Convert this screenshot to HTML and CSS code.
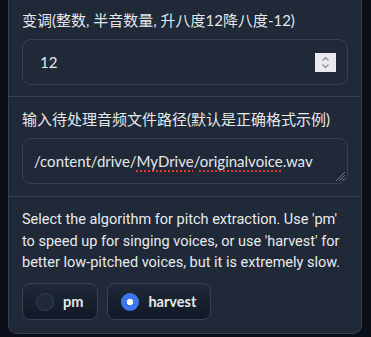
FILE: index.html
```html
<!DOCTYPE html>
<html>
<head>
<meta charset="utf-8">
<link rel="stylesheet" href="styles.css">
</head>
<body>
<div class="panel">
  <div class="block b1">
    <div class="label">变调(整数, 半音数量, 升八度12降八度-12)</div>
    <div class="input number">
      <span class="val">12</span>
      <span class="spin">
        <svg width="21" height="19" viewBox="0 0 21 19">
          <rect width="21" height="19" fill="#e9e9ee"/>
          <path d="M7.5 7.5 L10.5 4.5 L13.5 7.5" fill="none" stroke="#8a8a92" stroke-width="1.1"/>
          <path d="M7.5 11.5 L10.5 14.5 L13.5 11.5" fill="none" stroke="#8a8a92" stroke-width="1.1"/>
        </svg>
      </span>
    </div>
  </div>
  <div class="block b2">
    <div class="label">输入待处理音频文件路径(默认是正确格式示例)</div>
    <div class="input area">
      <span class="val">/content/drive/<span class="sp">MyDrive</span>/<span class="sp">originalvoice</span>.wav</span>
      <svg class="grip" width="12" height="12" viewBox="0 0 12 12">
        <path d="M11 2 L2 11 M11 5 L5 11 M11 8 L8 11" stroke="#6b7280" stroke-width="1"/>
      </svg>
    </div>
  </div>
  <div class="block b3">
    <div class="info">Select the algorithm for pitch extraction. Use 'pm' to speed up for singing voices, or use 'harvest' for better low-pitched voices, but it is extremely slow.</div>
    <div class="radios">
      <div class="radio"><span class="dot"></span><span>pm</span></div>
      <div class="radio on"><span class="dot"></span><span>harvest</span></div>
    </div>
  </div>
</div>
</body>
</html>
```

FILE: styles.css
```css
html, body {
  margin: 0;
  padding: 0;
  background: #0b0f19;
}
body {
  font-family: "Lato", "Noto Sans CJK SC", sans-serif;
  color: #e5e7eb;
}
.panel {
  margin-left: 8px;
  width: 354px;
  box-sizing: border-box;
  border: 1px solid #374151;
  border-top: none;
  border-radius: 0 0 9px 9px;
  background: #374151;
  display: flex;
  flex-direction: column;
  gap: 1px;
  overflow: hidden;
}
.block {
  background: #1f2937;
  padding: 12px 13px;
}
.b1 { padding-top: 10px; padding-bottom: 11px; }
.b3 { padding-bottom: 13px; }
.label {
  font-size: 15px;
  line-height: 21px;
  color: #e5e7eb;
  margin-bottom: 8px;
}
.input {
  height: 46px;
  box-sizing: border-box;
  border: 1px solid #374151;
  border-radius: 9px;
  background: #1f2937;
  display: flex;
  align-items: center;
  font-size: 15px;
  color: #e5e7eb;
  position: relative;
}
.number {
  padding: 0 11px 0 17px;
  justify-content: space-between;
}
.spin { display: flex; }
.area {
  padding: 0 11px;
}
.sp {
  text-decoration: underline dotted #e0353b;
  text-decoration-thickness: 2px;
  text-underline-offset: 3px;
}
.grip {
  position: absolute;
  right: 1px;
  bottom: 1px;
}
.info {
  font-family: "Roboto", sans-serif;
  font-size: 14.5px;
  line-height: 21.5px;
  color: #e8eaee;
  margin-bottom: 9.5px;
}
.radios {
  display: flex;
  gap: 9px;
}
.radio {
  height: 37px;
  box-sizing: border-box;
  border: 1px solid #374151;
  border-radius: 8px;
  background: linear-gradient(to top, #111827, #1f2937);
  display: flex;
  align-items: center;
  gap: 9px;
  padding: 0 14px 0 13px;
  font-size: 14.5px;
  font-weight: 700;
  color: #e5e7eb;
}
.dot {
  width: 18px;
  height: 18px;
  box-sizing: border-box;
  border-radius: 50%;
  border: 1px solid #374151;
  background: #1f2937;
}
.on .dot {
  border: none;
  background: radial-gradient(circle, #ffffff 0 3px, #3b76f0 3.5px);
}
```
